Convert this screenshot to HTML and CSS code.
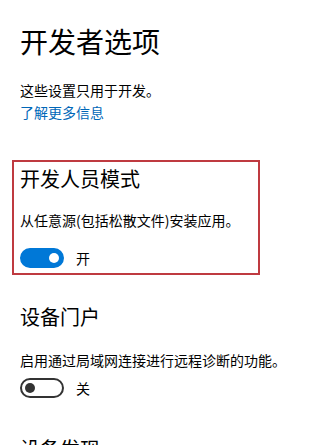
FILE: index.html
```html
<!doctype html>
<html>
<head>
<meta charset="utf-8">
<link rel="stylesheet" href="styles.css">
</head>
<body>
<div class='page'>
  <h1 class='title'>开发者选项</h1>
  <p class='text'>这些设置只用于开发。</p>
  <a class='link' href='#'>了解更多信息</a>

  <div class='group marked'>
    <h2 class='heading'>开发人员模式</h2>
    <p class='text desc'>从任意源(包括松散文件)安装应用。</p>
    <div class='toggle-row gap-wide'>
      <span class='switch on'></span>
      <span class='switch-label'>开</span>
    </div>
  </div>

  <div class='group portal'>
    <h2 class='heading'>设备门户</h2>
    <p class='text desc'>启用通过局域网连接进行远程诊断的功能。</p>
    <div class='toggle-row'>
      <span class='switch'></span>
      <span class='switch-label'>关</span>
    </div>
  </div>

  <div class='group discovery'>
    <h2 class='heading'>设备发现</h2>
  </div>
</div>
</body>
</html>
```

FILE: styles.css
```css
html, body{
	margin:0;
	padding:0;
	background:#fff;
}
body{
	font-family: "Noto Sans CJK SC", "Noto Sans", sans-serif;
	color:#000;
	overflow:hidden;
}
.page{
	padding:23px 0 0 20px;
}
.title{
	margin:0;
	font-size:28px;
	line-height:36px;
	font-weight:normal;
}
.text{
	margin:21px 0 0 0;
	font-size:14px;
	line-height:20px;
}
.link{
	display:block;
	margin-top:2px;
	font-size:14px;
	line-height:20px;
	color:#0067b8;
	text-decoration:none;
}
.group.marked{
	box-sizing:border-box;
	width:248px;
	margin:38px 0 0 -8px;
	padding:3px 0 5px 6px;
	border:2px solid #bf3a40;
}
.group.portal{
	margin-top:28px;
}
.group.discovery{
	margin-top:37px;
}
.heading{
	margin:0;
	font-size:20px;
	line-height:28px;
	font-weight:normal;
}
.desc{
	margin-top:17px;
}
.portal .desc{
	margin-top:19px;
}
.toggle-row{
	display:flex;
	align-items:center;
	gap:12px;
	margin-top:8px;
	height:20px;
}
.toggle-row.gap-wide{
	margin-top:18px;
}
.switch{
	position:relative;
	box-sizing:border-box;
	width:44px;
	height:20px;
	border-radius:10px;
	border:2px solid #333;
	background:#fff;
}
.switch::after{
	content:'';
	position:absolute;
	top:3px;
	left:3px;
	width:10px;
	height:10px;
	border-radius:50%;
	background:#333;
}
.switch.on{
	border-color:#0078d7;
	background:#0078d7;
}
.switch.on::after{
	left:auto;
	right:3px;
	background:#fff;
}
.switch-label{
	font-size:14px;
	line-height:20px;
}
```
